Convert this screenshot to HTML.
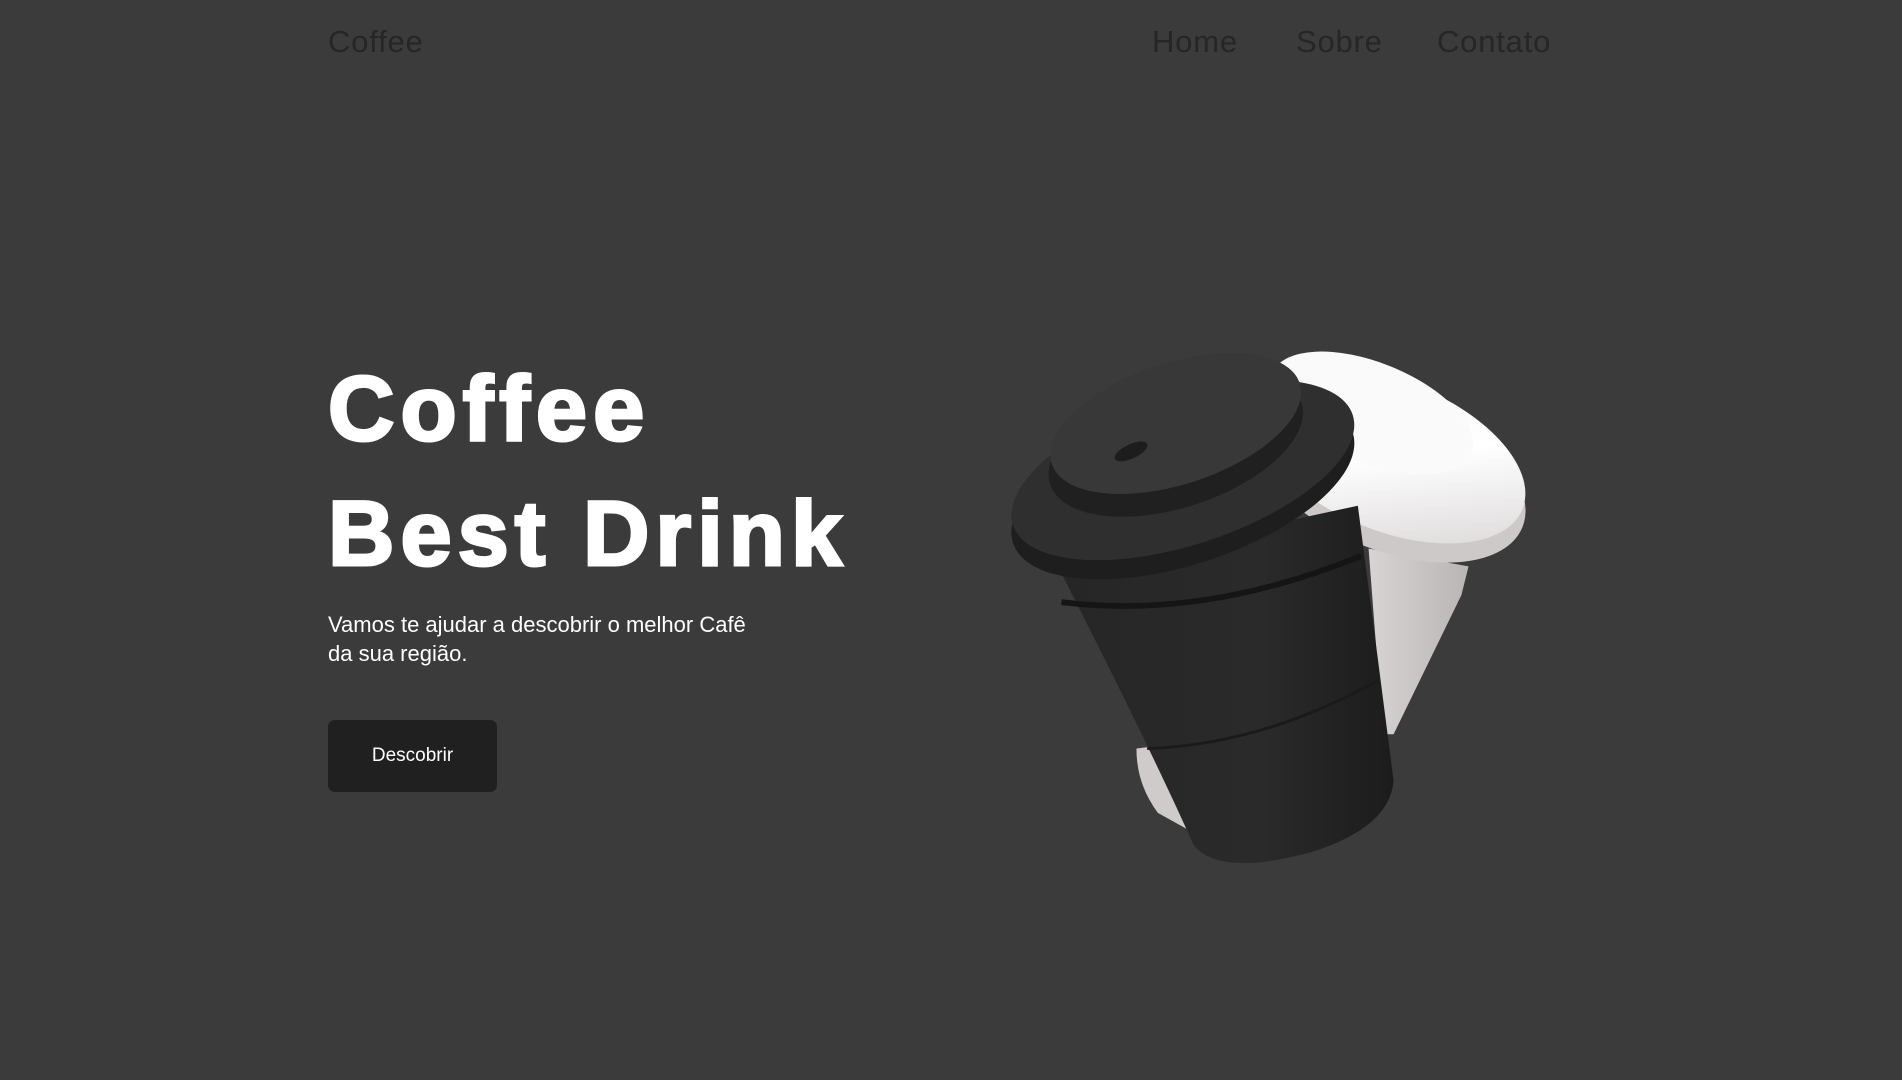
<!DOCTYPE html>
<html><head><meta charset="utf-8">
<style>
html,body{margin:0;padding:0;width:1902px;height:1080px;overflow:hidden;background:#3b3b3b;font-family:"Liberation Sans",sans-serif;}
.nav{position:absolute;top:24px;font-size:31px;letter-spacing:0.8px;color:#262626;line-height:36px;}
h1{position:absolute;margin:0;left:328px;color:#fff;font-weight:bold;font-size:92px;letter-spacing:6px;line-height:1;-webkit-text-stroke:3px #fff;}
p{position:absolute;left:328px;top:610px;margin:0;color:#fff;font-size:22px;line-height:29px;width:480px;}
.btn{position:absolute;left:328px;top:720px;width:169px;height:72px;background:#202020;border-radius:7px;color:#fff;font-size:19px;display:flex;align-items:center;justify-content:center;}
svg{position:absolute;left:990px;top:320px;}
</style></head><body>
<div class="nav" style="left:328px">Coffee</div>
<div class="nav" style="left:1152px">Home</div>
<div class="nav" style="left:1296px">Sobre</div>
<div class="nav" style="left:1437px">Contato</div>
<h1 style="top:363px">Coffee</h1>
<h1 style="top:488px">Best Drink</h1>
<p>Vamos te ajudar a descobrir o melhor Cafê<br>da sua região.</p>
<div class="btn">Descobrir</div>
<svg width="560" height="560" viewBox="0 0 1568 1568">
<defs>
<linearGradient id="w" x1="0" y1="0" x2="1" y2="1"><stop offset="0" stop-color="#f4f2f2"/><stop offset="0.5" stop-color="#ffffff"/><stop offset="1" stop-color="#d4d0d0"/></linearGradient>
<linearGradient id="wb" x1="0" y1="0" x2="1" y2="0"><stop offset="0" stop-color="#d8d4d4"/><stop offset="1" stop-color="#b9b5b5"/></linearGradient>
<linearGradient id="b" x1="0" y1="0" x2="1" y2="0"><stop offset="0" stop-color="#262626"/><stop offset="0.6" stop-color="#2a2a2a"/><stop offset="1" stop-color="#1c1c1c"/></linearGradient>
</defs>
<path d="M410 1200 L560 1180 L560 1430 L470 1380 Q410 1300 410 1200Z" fill="#cfcbcb"/>
<path d="M1060 640 L1340 690 L1320 770 L1130 1160 L1100 1160 Z" fill="url(#wb)"/>
<ellipse cx="1120" cy="430" rx="400" ry="215" transform="rotate(22 1120 430)" fill="#cdc9c9"/>
<ellipse cx="1120" cy="380" rx="400" ry="210" transform="rotate(22 1120 380)" fill="url(#w)"/>
<ellipse cx="1070" cy="260" rx="300" ry="140" transform="rotate(22 1070 260)" fill="#fbfafa"/>
<path d="M195 700 L1030 520 L1090 980 L1130 1290 Q1120 1420 900 1490 Q640 1560 570 1470 Q450 1200 195 700Z" fill="url(#b)"/>
<path d="M200 790 Q600 840 1040 660" stroke="#151515" stroke-width="16" fill="none"/>
<path d="M440 1200 Q760 1190 1085 1010" stroke="#1a1a1a" stroke-width="8" fill="none"/>
<ellipse cx="540" cy="470" rx="500" ry="215" transform="rotate(-18 540 470)" fill="#1e1e1e"/>
<ellipse cx="540" cy="420" rx="500" ry="210" transform="rotate(-18 540 420)" fill="#2f2f2f"/>
<ellipse cx="520" cy="345" rx="370" ry="180" transform="rotate(-18 520 345)" fill="#202020"/>
<ellipse cx="520" cy="290" rx="365" ry="170" transform="rotate(-18 520 290)" fill="#383838"/>
<ellipse cx="395" cy="368" rx="50" ry="20" transform="rotate(-25 395 368)" fill="#1d1d1d"/>
</svg>
</body></html>
